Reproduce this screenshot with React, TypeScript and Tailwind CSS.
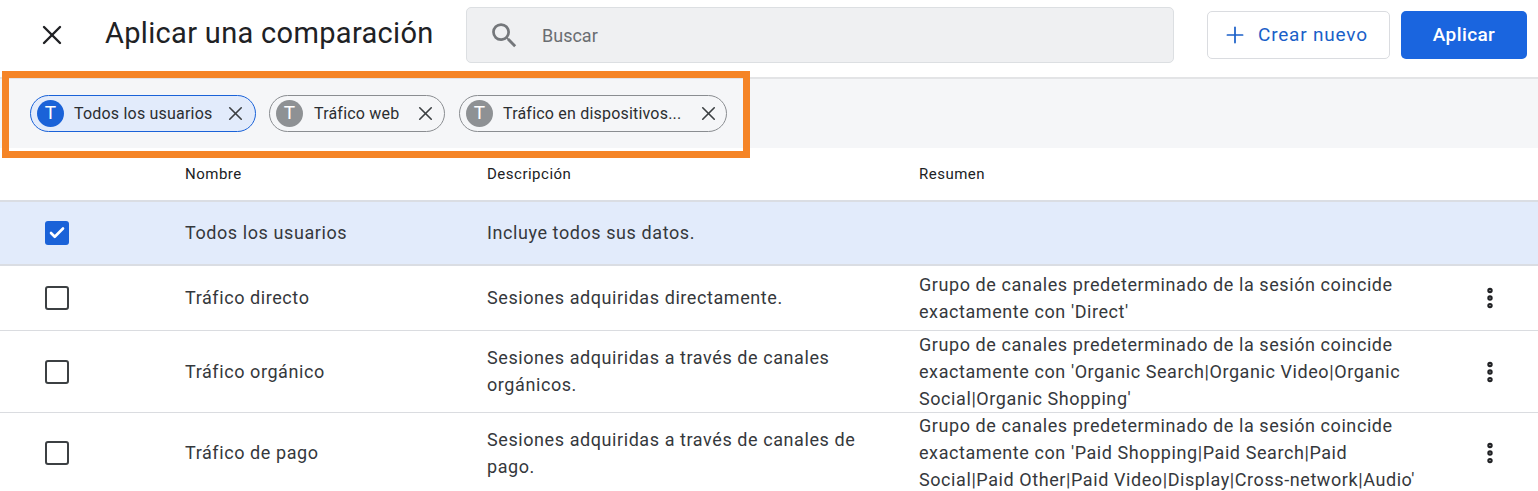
import { Check, MoreVertical, Plus, X } from "lucide-react";

const chips = [
  { label: "Todos los usuarios", active: true, box: "w-[226px] pr-[8px]", textGap: "ml-[10px]" },
  { label: "Tráfico web", active: false, box: "w-[176px] pr-[7px]", textGap: "ml-[11px]" },
  { label: "Tráfico en dispositivos...", active: false, box: "ml-[1px] w-[268px] pr-[6px]", textGap: "ml-[10px]" },
];

const rows = [
  {
    name: "Tráfico directo",
    description: ["Sesiones adquiridas directamente."],
    summary: ["Grupo de canales predeterminado de la sesión coincide", "exactamente con 'Direct'"],
    height: "h-[65px]",
    lift: "pb-[2px]",
  },
  {
    name: "Tráfico orgánico",
    description: ["Sesiones adquiridas a través de canales", "orgánicos."],
    summary: [
      "Grupo de canales predeterminado de la sesión coincide",
      "exactamente con 'Organic Search|Organic Video|Organic",
      "Social|Organic Shopping'",
    ],
    height: "h-[82px]",
    lift: "pb-[2px]",
  },
  {
    name: "Tráfico de pago",
    description: ["Sesiones adquiridas a través de canales de", "pago."],
    summary: [
      "Grupo de canales predeterminado de la sesión coincide",
      "exactamente con 'Paid Shopping|Paid Search|Paid",
      "Social|Paid Other|Paid Video|Display|Cross-network|Audio'",
    ],
    height: "h-[80px]",
    lift: "",
  },
];

function Lines({ lines, lift = "" }: { lines: string[]; lift?: string }) {
  return (
    <div className={lift}>
      {lines.map((line) => (
        <div key={line} className="h-[27px] whitespace-nowrap leading-[27px]">
          {line}
        </div>
      ))}
    </div>
  );
}

function Chip({ label, active, box, textGap }: { label: string; active: boolean; box: string; textGap: string }) {
  return (
    <div
      className={`flex h-[37px] items-center rounded-full border pl-[6px] ${box} ${
        active ? "border-[#1a62d8] bg-[#e2ebfb]" : "border-[#8a8d91] bg-[#f5f6f8]"
      }`}
    >
      <span
        className={`flex h-[27px] w-[27px] shrink-0 items-center justify-center rounded-full text-[19px] text-white ${
          active ? "bg-[#1a62d8]" : "bg-[#8e9194]"
        }`}
      >
        T
      </span>
      <span className={`flex-1 whitespace-nowrap text-[16px] tracking-[0.2px] text-[#2b2e31] ${textGap}`}>{label}</span>
      <X className="h-[23px] w-[23px] shrink-0 text-[#3c4043]" strokeWidth={1.7} />
    </div>
  );
}

export default function App() {
  return (
    <div className="relative h-[491px] w-[1538px] overflow-hidden bg-white font-['Roboto',sans-serif] text-[#35383c]">
      <header className="flex h-[77px] items-start pl-[36px]">
        <X className="mt-[19px] h-[32px] w-[32px] text-[#202124]" strokeWidth={1.8} />
        <h1 className="ml-[37px] mt-[14px] w-[361px] whitespace-nowrap text-[29px] leading-[38px] tracking-[0.32px] text-[#202124]">
          Aplicar una comparación
        </h1>
        <div className="mt-[7px] flex h-[56px] w-[708px] items-center rounded-[5px] border border-[#dcdfe2] bg-[#eff0f2] pl-[21px]">
          <svg viewBox="0 0 24 24" className="h-[33px] w-[33px] fill-[#74777b]">
            <path d="M15.5 14h-.79l-.28-.27A6.471 6.471 0 0 0 16 9.5 6.5 6.5 0 1 0 9.5 16c1.61 0 3.09-.59 4.23-1.57l.27.28v.79l5 4.99L20.49 19l-4.99-5zm-6 0C7.01 14 5 11.99 5 9.5S7.01 5 9.5 5 14 7.01 14 9.5 11.99 14 9.5 14z" />
          </svg>
          <span className="ml-[21px] text-[18px] text-[#6a6d71]">Buscar</span>
        </div>
        <button className="ml-[33px] mt-[11px] flex h-[48px] w-[183px] items-center rounded-[5px] border border-[#dadce0] bg-white pl-[14px] text-[19px] tracking-[0.8px] text-[#1a5fc8]">
          <Plus className="h-[26px] w-[26px]" strokeWidth={1.6} />
          <span className="ml-[10px]">Crear nuevo</span>
        </button>
        <button className="ml-[11px] mt-[11px] h-[48px] w-[126px] rounded-[5px] bg-[#1a65df] text-[19px] font-medium tracking-[0.4px] text-white">
          Aplicar
        </button>
      </header>

      <div className="flex h-[71px] items-center gap-[13px] border-t-2 border-[#e3e4e6] bg-[#f5f6f8] pl-[30px]">
        {chips.map((chip) => (
          <Chip key={chip.label} {...chip} />
        ))}
      </div>

      <div className="text-[18px] tracking-[0.58px]">
        <div className="flex h-[52px] items-center text-[15px] font-[450] tracking-[0.5px] text-[#202124]">
          <div className="ml-[185px] w-[302px]">Nombre</div>
          <div className="w-[432px]">Descripción</div>
          <div>Resumen</div>
        </div>

        <div className="flex h-[66px] items-center border-y-2 border-[#dadde3] bg-[#e2ebfb]">
          <div className="ml-[45px] flex h-[24px] w-[24px] items-center justify-center rounded-[3px] bg-[#1a62d8]">
            <Check className="h-[18px] w-[18px] text-white" strokeWidth={3.5} />
          </div>
          <div className="ml-[116px] w-[302px] pb-[1px]">Todos los usuarios</div>
          <div className="pb-[1px]">Incluye todos sus datos.</div>
        </div>

        {rows.map((row) => (
          <div key={row.name} className={`flex items-center border-b border-[#dadce0] ${row.height}`}>
            <div className="ml-[45px] h-[24px] w-[24px] rounded-[3px] border-2 border-[#3c4043]" />
            <div className="ml-[116px] w-[302px] pb-[1px]">{row.name}</div>
            <div className="w-[432px]">
              <Lines lines={row.description} lift={row.lift} />
            </div>
            <div className="w-[550px]">
              <Lines lines={row.summary} />
            </div>
            <MoreVertical className="ml-[8px] h-[26px] w-[26px] text-[#202124]" strokeWidth={3} />
          </div>
        ))}
      </div>

      <div className="pointer-events-none absolute left-[2px] top-[71px] h-[87px] w-[748px] border-[7px] border-[#f58426]" />
    </div>
  );
}
